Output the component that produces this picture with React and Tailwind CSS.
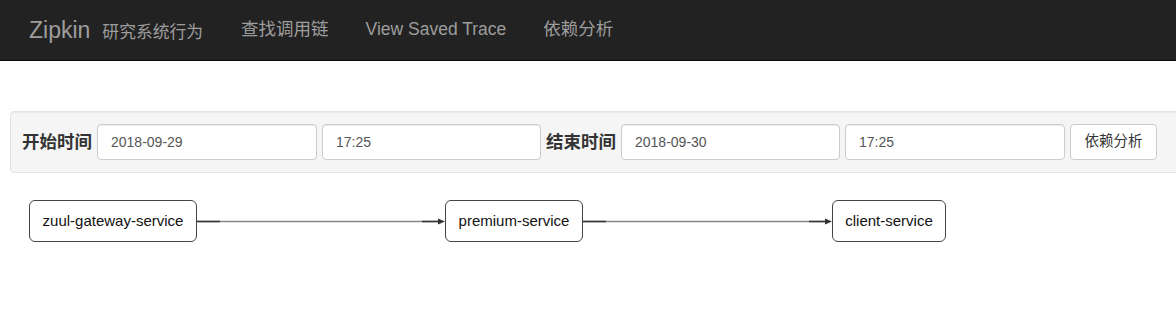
const font = { fontFamily: '"Liberation Sans", Arial, "Noto Sans CJK SC", sans-serif' }

const navLinks = ['查找调用链', 'View Saved Trace', '依赖分析']

const nodes = [
  { name: 'zuul-gateway-service', left: 'left-[29px]', width: 'w-[168px]' },
  { name: 'premium-service', left: 'left-[445px]', width: 'w-[138px]' },
  { name: 'client-service', left: 'left-[832px]', width: 'w-[114px]' },
]

const edges = [
  [197, 445],
  [583, 832],
]

function Field({ value, width = 'w-[220px]' }) {
  return (
    <input
      readOnly
      value={value}
      className={`h-[36px] shrink-0 rounded-[4px] border border-[#ccc] bg-white px-[13px] text-[14px] text-[#555] shadow-[inset_0_1px_1px_rgba(0,0,0,0.075)] outline-none ${width}`}
      style={font}
    />
  )
}

export default function App() {
  return (
    <div className="h-[324px] w-[1176px] overflow-hidden bg-white text-[#333]" style={font}>
      <nav className="flex h-[61px] items-center border-b border-[#080808] bg-[#222] text-[#9d9d9d]">
        <div className="ml-[29px] flex items-baseline gap-[12px]">
          <span className="text-[23px] leading-none">Zipkin</span>
          <span className="text-[16.8px] leading-none">研究系统行为</span>
        </div>
        <div className="ml-[38px] flex items-center gap-[37px] text-[17.5px]">
          {navLinks.map((link) => (
            <span key={link} className="leading-none">
              {link}
            </span>
          ))}
        </div>
      </nav>

      <div className="pl-[10px] pt-[50px]">
        <div className="flex h-[62px] w-[1200px] items-center gap-[5px] rounded-[4px] border border-[#e3e3e3] bg-[#f5f5f5] pl-[11px] shadow-[inset_0_1px_1px_rgba(0,0,0,0.05)]">
          <label className="text-[17.5px] font-bold text-[#333]">开始时间</label>
          <Field value="2018-09-29" />
          <Field value="17:25" width="w-[219px]" />
          <label className="text-[17.5px] font-bold text-[#333]">结束时间</label>
          <Field value="2018-09-30" width="w-[219px]" />
          <Field value="17:25" />
          <button
            type="button"
            className="h-[36px] w-[87px] shrink-0 rounded-[4px] border border-[#ccc] bg-white text-[14.5px] text-[#333]"
          >
            依赖分析
          </button>
        </div>
      </div>

      <div className="relative mt-[27px] h-[80px]">
        <svg className="absolute left-0 top-0" width="1176" height="80">
          {edges.map(([a, b]) => (
            <g key={a}>
              <line x1={a} y1="21.5" x2={b - 4} y2="21.5" stroke="#888" strokeWidth="1.5" />
              <line x1={a} y1="21.5" x2={a + 23} y2="21.5" stroke="#333" strokeWidth="1.5" />
              <line x1={b - 23} y1="21.5" x2={b - 5} y2="21.5" stroke="#333" strokeWidth="1.5" />
              <path d={`M${b - 7} 18.5 L${b} 21.5 L${b - 7} 24.5 Z`} fill="#333" />
            </g>
          ))}
        </svg>
        {nodes.map((node) => (
          <div
            key={node.name}
            className={`absolute top-0 flex h-[42px] items-center justify-center rounded-[6px] border border-[#444] bg-white pt-[1px] text-[15px] text-[#111] ${node.left} ${node.width}`}
          >
            {node.name}
          </div>
        ))}
      </div>
    </div>
  )
}
